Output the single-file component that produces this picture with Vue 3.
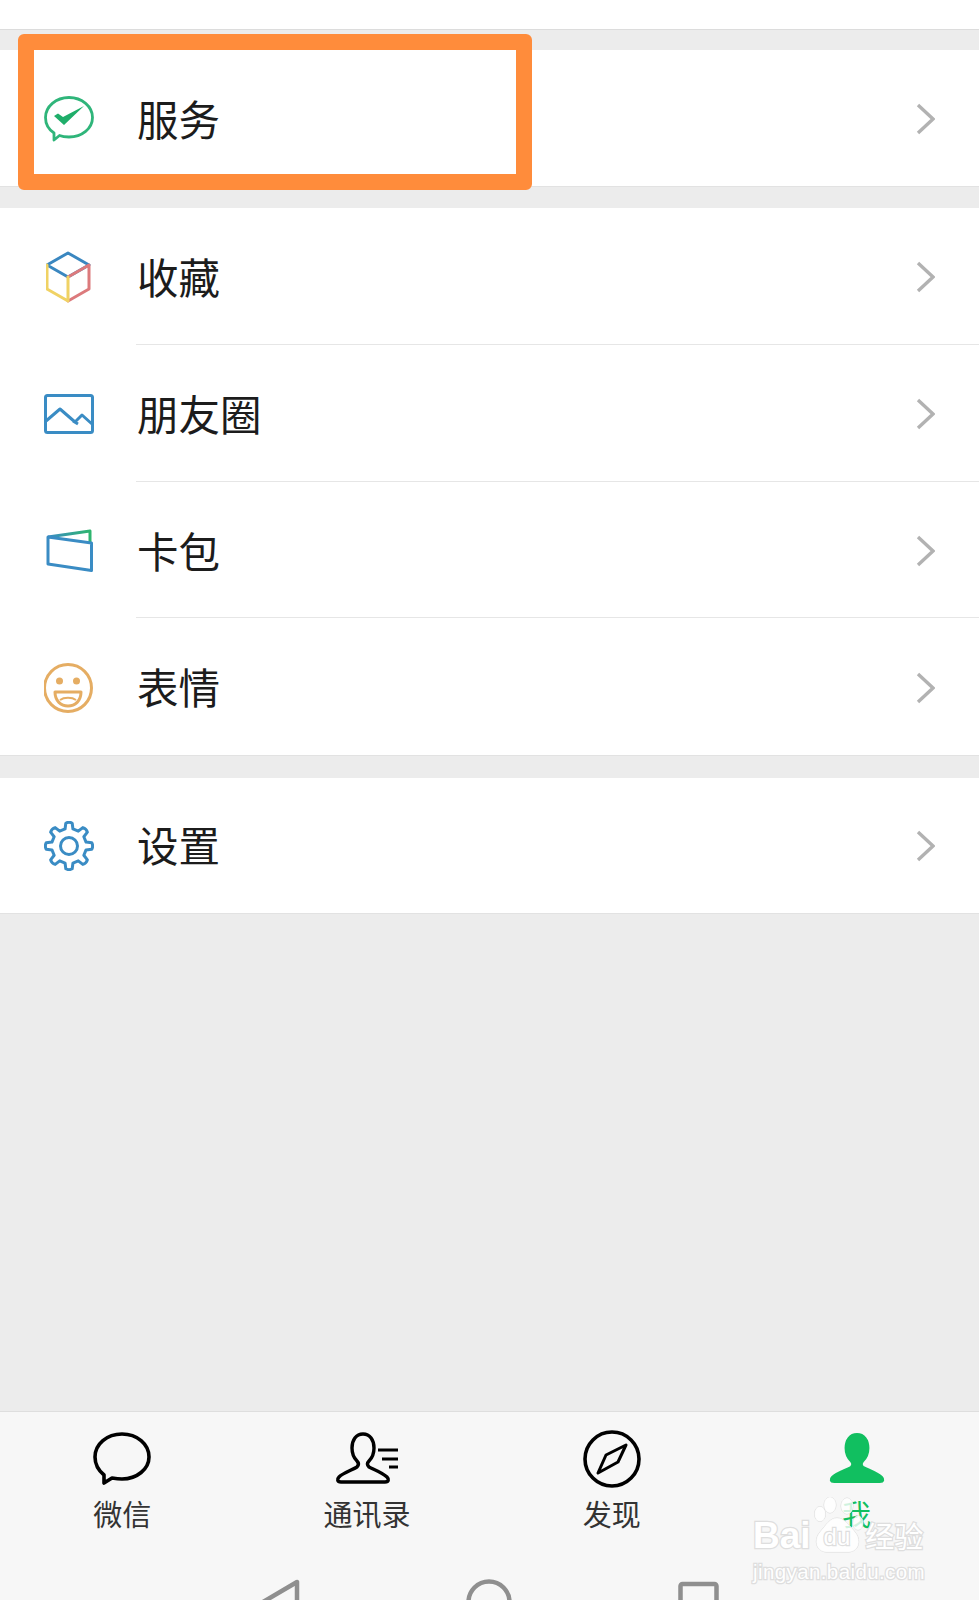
<script setup>
// menu groups, top to bottom
const groups = [
  [{ key: 'service', label: '服务' }],
  [
    { key: 'favorite', label: '收藏' },
    { key: 'moments', label: '朋友圈' },
    { key: 'wallet', label: '卡包' },
    { key: 'sticker', label: '表情' }
  ],
  [{ key: 'settings', label: '设置' }]
]

const PERSON = 'M28 2C21 2 17 8 17 16C17 22 19 26 22 29C24 31 24 33 22 35C17 38 8 41 4 45C2 47 2 50 6 50H50C54 50 54 47 52 45C48 41 40 38 34 35C32 33 32 31 34 29C37 26 39 22 39 16C39 8 35 2 28 2Z'

// 8 toothed gear outline
const gearPath = (() => {
  const pt = (deg, r) => {
    const a = (deg * Math.PI) / 180
    return `${(25 + r * Math.cos(a)).toFixed(2)} ${(25 + r * Math.sin(a)).toFixed(2)}`
  }
  let d = ''
  for (let i = 0; i < 8; i++) {
    const a = i * 45 - 90
    d += `${i ? 'L' : 'M'}${pt(a - 13, 17.5)}L${pt(a - 8, 23)}Q${pt(a, 24.5)} ${pt(a + 8, 23)}L${pt(a + 13, 17.5)}`
  }
  return d + 'Z'
})()
</script>

<template>
  <div class="page">
    <div class="top"></div>

    <div class="groups">
      <section v-for="(group, g) in groups" :key="g" class="group">
        <div v-for="row in group" :key="row.key" class="row">
          <span class="icon">
            <svg v-if="row.key === 'service'" width="50" height="46" viewBox="0 0 50 46">
              <path d="M10 44L10 37C4 33 1.500 27 1.500 21.500C1.500 10.500 12 1.500 25 1.500C38 1.500 48.500 10.500 48.500 21.500C48.500 32.500 38 41 25 41C21 41 18 40.500 15.500 39.500Z" fill="none" stroke="#2fb57a" stroke-width="2.800" stroke-linejoin="round" />
              <path d="M10 20L14 17.500L19 21L40 10L20 29Z" fill="#1fae6a" />
            </svg>
            <svg v-else-if="row.key === 'favorite'" width="46" height="52" viewBox="1 0 46 52" fill="none" stroke-width="3" stroke-linecap="round" stroke-linejoin="round">
              <path d="M2 14L23 2L44 14L23 26Z" stroke="#3a87c0" />
              <path d="M23 26L44 14V38L23 50" stroke="#dc7a7c" />
              <path d="M2 14V38L23 50V26" stroke="#f0d264" />
            </svg>
            <svg v-else-if="row.key === 'moments'" width="50" height="40" viewBox="0 0 50 40" fill="none" stroke="#3a8cc4" stroke-width="3" stroke-linejoin="round">
              <rect x="1.500" y="1.500" width="47" height="37" rx="2" />
              <path d="M2 27L16 15L31 28L38 21L48 30M29 27L34 30" />
            </svg>
            <svg v-else-if="row.key === 'wallet'" width="47" height="43" viewBox="0 0 47 43" fill="none" stroke-width="3" stroke-linejoin="round">
              <defs>
                <linearGradient id="flap" x1="0" y1="0" x2="1" y2="0">
                  <stop offset="0" stop-color="#3a8cc4" />
                  <stop offset="1" stop-color="#2fb56f" />
                </linearGradient>
              </defs>
              <path d="M2 8L44 2V13" stroke="url(#flap)" />
              <path d="M2 8L45.500 14V41.500L2 35Z" stroke="#3a8cc4" />
            </svg>
            <svg v-else-if="row.key === 'sticker'" width="50" height="50" viewBox="1 0 50 50" fill="none" stroke="#e5ad63" stroke-width="3">
              <circle cx="25" cy="25" r="23.500" />
              <circle cx="16.500" cy="18" r="3.500" fill="#e5ad63" stroke="none" />
              <circle cx="33.500" cy="18" r="3.500" fill="#e5ad63" stroke="none" />
              <path d="M12 29H38C38 38 32 43 25 43C18 43 12 38 12 29Z" stroke-linejoin="round" />
              <path d="M17 37C21 34 29 34 33 37" stroke-width="2" />
            </svg>
            <svg v-else width="50" height="50" viewBox="0 0 50 50" fill="none" stroke="#3a8cc4" stroke-width="3" stroke-linejoin="round">
              <path :d="gearPath" />
              <circle cx="25" cy="25" r="8.500" />
            </svg>
          </span>
          <span class="label">{{ row.label }}</span>
          <svg class="chevron" width="19" height="32" viewBox="0 0 19 32" fill="none">
            <path d="M2 2L17 16L2 30" stroke="#b2b2b2" stroke-width="3.400" />
          </svg>
        </div>
      </section>
    </div>

    <div class="spacer"></div>

    <footer class="tabbar">
      <nav class="tabs">
        <div class="tab">
          <svg width="58" height="54" viewBox="0 0 58 54" fill="none" stroke="#000" stroke-width="3.600" stroke-linejoin="round">
            <path d="M11 51V43C5 38 2 32 2 25C2 12 14 2 29 2C44 2 56 12 56 25C56 37 44 47 29 47C25 47 22 46.500 19 46Z" />
          </svg>
          <span>微信</span>
        </div>
        <div class="tab">
          <svg width="64" height="54" viewBox="0 0 64 54" fill="none" stroke="#000" stroke-width="3.400">
            <path :d="PERSON" />
            <path d="M43 18H63M47 27H63M54 35H63" stroke-width="3" />
          </svg>
          <span>通讯录</span>
        </div>
        <div class="tab">
          <svg class="compass" width="58" height="58" viewBox="0 0 58 58" fill="none" stroke="#000" stroke-width="3.600" stroke-linejoin="round">
            <circle cx="29" cy="29" r="27" />
            <path d="M43 15L35 32L15 43L23 25Z" stroke-width="3" />
          </svg>
          <span>发现</span>
        </div>
        <div class="tab active">
          <svg width="58" height="54" viewBox="0 0 56 54" preserveAspectRatio="none">
            <path :d="PERSON" fill="#11bf60" stroke="#11bf60" stroke-width="2" />
          </svg>
          <span>我</span>
        </div>
      </nav>

      <div class="sysnav">
        <svg width="40" height="46" viewBox="0 0 40 46" fill="none" stroke="#8f8f8f" stroke-width="4.500" stroke-linejoin="round">
          <path d="M37 3V43L3 23Z" />
        </svg>
        <svg width="46" height="46" viewBox="0 0 46 46" fill="none" stroke="#8f8f8f" stroke-width="4.500">
          <circle cx="23" cy="23" r="20.500" />
        </svg>
        <svg width="41" height="46" viewBox="0 0 41 46" fill="none" stroke="#8f8f8f" stroke-width="4.500" stroke-linejoin="round">
          <rect x="2.500" y="5" width="36" height="36" rx="2" />
        </svg>
      </div>
    </footer>

    <div class="mark-box"></div>

    <div class="watermark">
      <svg class="paw" width="52" height="56" viewBox="0 0 52 56" fill="#fff" fill-opacity="0.8" stroke="#dcdcdc" stroke-width="1">
        <ellipse cx="8" cy="17" rx="5.500" ry="7.500" />
        <ellipse cx="18" cy="8" rx="6" ry="8" />
        <ellipse cx="35" cy="9" rx="6" ry="8" />
        <ellipse cx="46" cy="26" rx="5" ry="7" />
        <path d="M25 21C32 21 37 28 43 35C49 42 48 54 37 55H14C3 54 2 42 8 35C14 28 18 21 25 21Z" />
      </svg>
      <div class="mark-title">
        <span>Bai</span>
        <span class="du">du</span>
        <span class="cn">经验</span>
      </div>
      <div class="mark-url">jingyan.baidu.com</div>
    </div>
  </div>
</template>

<style scoped>
.page {
  position: relative;
  display: flex;
  flex-direction: column;
  width: 979px;
  height: 1600px;
  overflow: hidden;
  background: #ececec;
  font-family: "Noto Sans CJK SC", "Noto Sans", sans-serif;
}

.top {
  height: 29px;
  flex: none;
  background: #fff;
  border-bottom: 1px solid #dcdcdc;
}

.groups {
  display: flex;
  flex-direction: column;
  gap: 21px;
  padding-top: 20px;
  flex: none;
}

.group {
  display: flex;
  flex-direction: column;
  box-sizing: border-box;
  background: #fff;
  border-bottom: 1px solid #e2e2e2;
}

.group:nth-child(1) {
  height: 137px;
}

.group:nth-child(2) {
  height: 548px;
}

.group:nth-child(3) {
  height: 136px;
  margin-top: 1px;
}

.row {
  position: relative;
  display: flex;
  align-items: center;
  flex: 1;
  padding: 2px 44px 0;
  box-sizing: border-box;
}

.group:nth-child(3) .row {
  padding-top: 0;
}

.row + .row::before {
  content: '';
  position: absolute;
  left: 136px;
  right: 0;
  top: -1px;
  height: 1px;
  background: #e6e6e6;
}

.icon {
  display: flex;
  align-items: center;
  justify-content: center;
  width: 50px;
  height: 50px;
  margin-right: 43px;
  flex: none;
}

.label {
  flex: 1;
  padding-bottom: 1px;
  font-size: 41.500px;
  line-height: 1;
  color: #1c1c1c;
}

.chevron {
  flex: none;
}

.spacer {
  flex: 1;
}

.tabbar {
  flex: none;
  height: 189px;
  box-sizing: border-box;
  background: #f7f7f7;
  border-top: 1px solid #dedede;
}

.tabs {
  display: grid;
  grid-template-columns: repeat(4, 1fr);
  padding-top: 20px;
}

.tab {
  display: flex;
  flex-direction: column;
  align-items: center;
  gap: 7px;
  font-size: 29px;
  line-height: 40px;
  color: #333;
}

.compass {
  margin: -2px 0;
}

.tab.active {
  color: #11bf60;
}

.sysnav {
  display: flex;
  justify-content: center;
  gap: 166px;
  margin-top: 46px;
}

.mark-box {
  position: absolute;
  left: 18px;
  top: 34px;
  width: 514px;
  height: 156px;
  box-sizing: border-box;
  border: 16px solid #ff8c3b;
  border-radius: 6px;
}

.watermark {
  position: absolute;
  left: 752px;
  top: 1496px;
  width: 180px;
  padding-left: 1px;
  color: #fff;
  font-family: "Liberation Sans", "Noto Sans CJK SC", sans-serif;
  -webkit-text-stroke: 2.500px #dedede;
  paint-order: stroke fill;
}

.paw {
  position: absolute;
  left: 60px;
  top: 1px;
}

.mark-title {
  position: relative;
  display: flex;
  align-items: baseline;
  margin-top: 20px;
  font-size: 37px;
  font-weight: 700;
  line-height: 38px;
}

.du {
  position: relative;
  top: -3px;
  margin-left: 13px;
  font-size: 24px;
  font-weight: 400;
}

.cn {
  margin-left: 15px;
  font-size: 29px;
  font-weight: 400;
  font-family: "Noto Sans CJK SC", sans-serif;
}

.mark-url {
  margin-top: 2px;
  font-size: 20.500px;
  line-height: 22px;
  letter-spacing: 0.4px;
}
</style>

<style>
html, body {
  margin: 0;
  background: #ececec;
}
</style>
